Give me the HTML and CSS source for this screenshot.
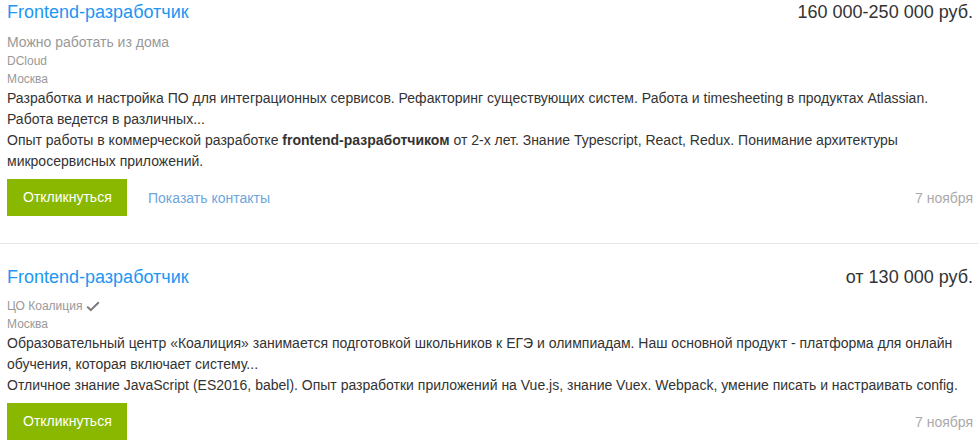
FILE: index.html
```html
<!DOCTYPE html>
<html lang="ru">
<head>
<meta charset="utf-8">
<title>Вакансии</title>
<link rel="stylesheet" href="styles.css">
</head>
<body>
<div class="list">
  <div class="card">
    <div class="head">
      <a class="title" href="#">Frontend-разработчик</a>
      <span class="salary">160 000-250 000 руб.</span>
    </div>
    <div class="meta">
      <div class="remote">Можно работать из дома</div>
      <div class="company">DCloud</div>
      <div class="city">Москва</div>
    </div>
    <div class="desc">
      <div>Разработка и настройка ПО для интеграционных сервисов. Рефакторинг существующих систем. Работа и timesheeting в продуктах Atlassian. Работа ведется в различных...</div>
      <div>Опыт работы в коммерческой разработке <b>frontend-разработчиком</b> от 2-х лет. Знание Typescript, React, Redux. Понимание архитектуры микросервисных приложений.</div>
    </div>
    <div class="actions">
      <div class="left">
        <a class="btn" href="#">Откликнуться</a>
        <a class="contacts" href="#">Показать контакты</a>
      </div>
      <span class="date">7 ноября</span>
    </div>
  </div>
  <div class="card">
    <div class="head">
      <a class="title" href="#">Frontend-разработчик</a>
      <span class="salary">от 130 000 руб.</span>
    </div>
    <div class="meta">
      <div class="company">ЦО Коалиция <svg class="check" width="14" height="11" viewBox="0 0 14 11"><path d="M1.2 5.6 L4.8 9.2 L12.8 1.2" fill="none" stroke="#7a7a7a" stroke-width="2"/></svg></div>
      <div class="city">Москва</div>
    </div>
    <div class="desc">
      <div>Образовательный центр «Коалиция» занимается подготовкой школьников к ЕГЭ и олимпиадам. Наш основной продукт - платформа для онлайн обучения, которая включает систему...</div>
      <div>Отличное знание JavaScript (ES2016, babel). Опыт разработки приложений на Vue.js, знание Vuex. Webpack, умение писать и настраивать config.</div>
    </div>
    <div class="actions">
      <div class="left">
        <a class="btn" href="#">Откликнуться</a>
      </div>
      <span class="date">7 ноября</span>
    </div>
  </div>
</div>
</body>
</html>
```

FILE: styles.css
```css
html, body {
  margin: 0;
  padding: 0;
  background: #fff;
}
body {
  font-family: "Liberation Sans", Arial, sans-serif;
  color: #333;
  font-size: 14px;
}
.card {
  padding: 21px 5px 27px 7px;
  border-bottom: 1px solid #e6e6e6;
}
.card:first-child {
  padding-top: 0;
}
.head {
  display: flex;
  justify-content: space-between;
  align-items: center;
  height: 24px;
  line-height: 24px;
}
.title {
  font-size: 18px;
  color: #2196f3;
  text-decoration: none;
}
.salary {
  font-size: 18px;
  color: #333;
}
.meta {
  margin-top: 8px;
  color: #999;
}
.remote {
  font-size: 14px;
  line-height: 20px;
}
.company, .city {
  font-size: 12px;
  line-height: 18px;
}
.company {
  display: flex;
  align-items: center;
  gap: 4px;
}
.check {
  display: block;
}
.desc {
  line-height: 21px;
  color: #333;
}
.desc b {
  font-weight: bold;
}
.actions {
  margin-top: 7px;
  display: flex;
  justify-content: space-between;
  align-items: center;
}
.left {
  display: flex;
  align-items: center;
  gap: 21px;
}
.btn {
  display: block;
  background: #8ab800;
  color: #fff;
  text-decoration: none;
  height: 37px;
  line-height: 37px;
  padding: 0 16px;
  width: 88px;
  text-align: center;
}
.contacts {
  color: #6ea6dc;
  text-decoration: none;
}
.date {
  color: #aaa;
}
```
